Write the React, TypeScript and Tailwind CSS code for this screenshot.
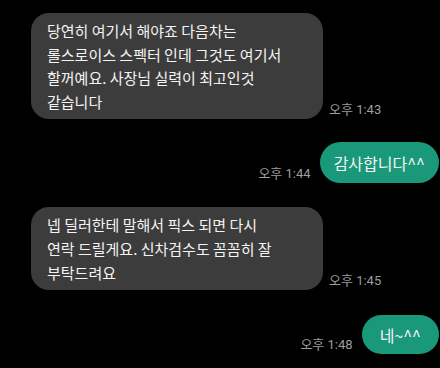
import { FC } from "react";

const font = { fontFamily: '"Noto Sans CJK KR", "Noto Sans", sans-serif' };

const Time: FC<{ t: string }> = ({ t }) => (
	<span className="mb-[1px] text-[13px] leading-[17px] text-[#9e9e9e] whitespace-nowrap font-['Roboto','Noto_Sans_CJK_KR',sans-serif]">
		{t}
	</span>
);

const Received: FC<{ lines: string[]; time: string }> = ({ lines, time }) => (
	<div className="flex items-end gap-[6px] pl-[31px]">
		<div className="w-[292px] rounded-[18px] bg-[#3c3c3c] pl-4 pr-3 py-[6px] text-[15px] leading-[23.6px] text-[#f4f4f4]">
			{lines.map((l) => (
				<div key={l} className="whitespace-nowrap">
					{l}
				</div>
			))}
		</div>
		<Time t={time} />
	</div>
);

const Sent: FC<{ text: string; time: string; cls: string }> = ({ text, time, cls }) => (
	<div className="flex items-end justify-end gap-[9px] pr-[1px]">
		<Time t={time} />
		<div
			className={`${cls} flex items-center rounded-full bg-[#1a987a] text-[16px] text-[#f4f4f4] whitespace-nowrap`}
		>
			{text}
		</div>
	</div>
);

export default function App() {
	return (
		<div className="w-[440px] h-[368px] overflow-hidden bg-black pt-[13px]" style={font}>
			<Received
				lines={[
					"당연히 여기서 해야죠 다음차는",
					"롤스로이스 스펙터 인데 그것도 여기서",
					"할꺼예요. 사장님 실력이 최고인것",
					"같습니다",
				]}
				time="오후 1:43"
			/>
			<div className="mt-[23px]">
				<Sent text="감사합니다^^" time="오후 1:44" cls="h-[41px] px-[14px]" />
			</div>
			<div className="mt-[24px]">
				<Received
					lines={[
						"넵 딜러한테 말해서 픽스 되면 다시",
						"연락 드릴게요. 신차검수도 꼼꼼히 잘",
						"부탁드려요",
					]}
					time="오후 1:45"
				/>
			</div>
			<div className="mt-[25px]">
				<Sent text="네~^^" time="오후 1:48" cls="h-[39px] px-[18px]" />
			</div>
		</div>
	);
}
